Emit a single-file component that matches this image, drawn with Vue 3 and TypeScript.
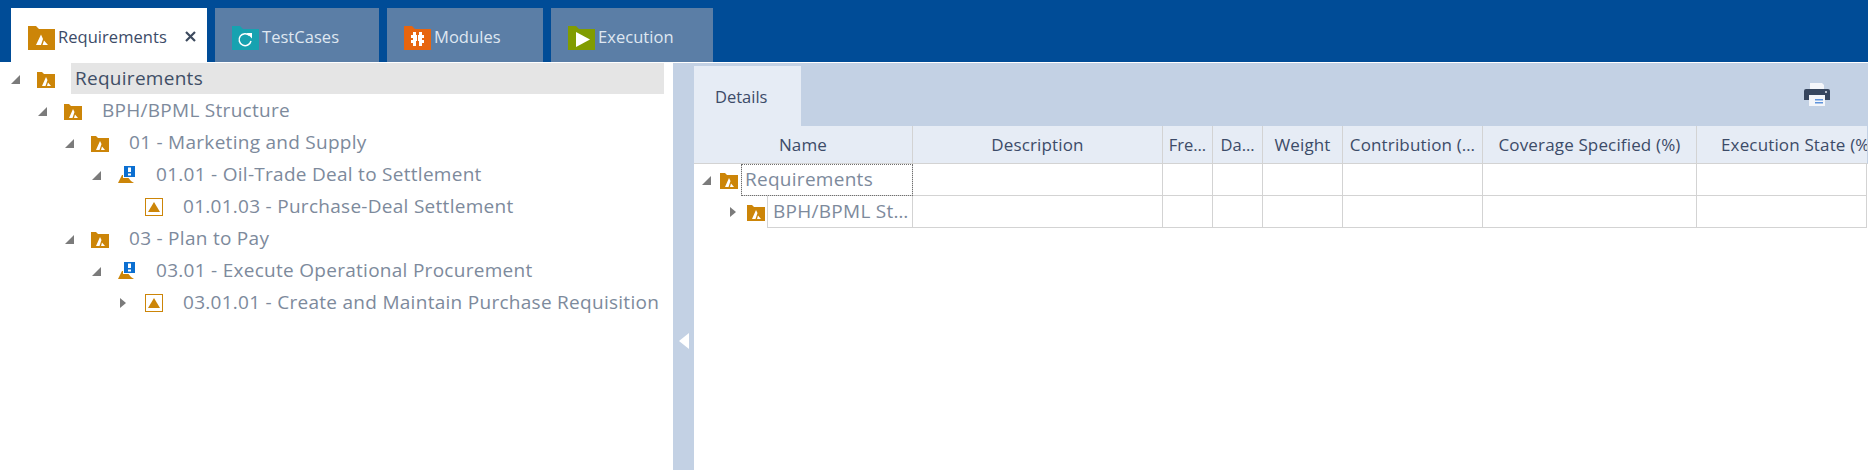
<script setup lang="ts">
type IconKind = 'folder' | 'process' | 'req'
interface TreeNode { label: string; depth: number; icon: IconKind; state: 'open' | 'closed' | 'leaf'; selected?: boolean }

const tabs = [
  { name: 'Requirements', kind: 'req', width: 196, active: true },
  { name: 'TestCases', kind: 'test', width: 164, active: false },
  { name: 'Modules', kind: 'mod', width: 156, active: false },
  { name: 'Execution', kind: 'exec', width: 162, active: false },
]

const nodes: TreeNode[] = [
  { label: 'Requirements', depth: 0, icon: 'folder', state: 'open', selected: true },
  { label: 'BPH/BPML Structure', depth: 1, icon: 'folder', state: 'open' },
  { label: '01 - Marketing and Supply', depth: 2, icon: 'folder', state: 'open' },
  { label: '01.01 - Oil-Trade Deal to Settlement', depth: 3, icon: 'process', state: 'open' },
  { label: '01.01.03 - Purchase-Deal Settlement', depth: 4, icon: 'req', state: 'leaf' },
  { label: '03 - Plan to Pay', depth: 2, icon: 'folder', state: 'open' },
  { label: '03.01 - Execute Operational Procurement', depth: 3, icon: 'process', state: 'open' },
  { label: '03.01.01 - Create and Maintain Purchase Requisition', depth: 4, icon: 'req', state: 'closed' },
]

const columns = [
  { title: 'Name', cls: '' },
  { title: 'Description', cls: '' },
  { title: 'Fre…', cls: 'tight' },
  { title: 'Da…', cls: 'tight' },
  { title: 'Weight', cls: '' },
  { title: 'Contribution (…', cls: '' },
  { title: 'Coverage Specified (%)', cls: '' },
  { title: 'Execution State (%)', cls: 'clip' },
]
const emptyCols = 7
</script>

<template>
  <div class="app">
    <header class="tabbar">
      <div
        v-for="t in tabs"
        :key="t.name"
        class="tab"
        :class="{ active: t.active }"
        :style="{ width: t.width + 'px' }"
      >
        <svg class="tab-icon" width="27" height="24" viewBox="0 0 27 24">
          <path
            d="M0 0H8L11 3H27V24H0Z"
            :fill="t.kind === 'req' ? '#cc8508' : t.kind === 'test' ? '#17a2b0' : t.kind === 'mod' ? '#e7650f' : '#819c00'"
          />
          <template v-if="t.kind === 'req'">
            <path d="M8 19L13 8.5L15 13L13 19Z M14.5 19L16 14.5L20 19Z" fill="#fff" />
          </template>
          <template v-else-if="t.kind === 'test'">
            <path d="M17.5 9.5A6 6 0 1 0 19 15" fill="none" stroke="#fff" stroke-width="1.5" />
            <path d="M14.5 7H20V12.5Z" fill="#fff" />
          </template>
          <template v-else-if="t.kind === 'mod'">
            <path d="M9 6H12V9H13V15H12V20H9V17H7V14H9V12H7V9H9Z M15 6H18V9H20V12H18V14H20V17H18V20H15V15H14V9H15Z" fill="#fff" />
          </template>
          <template v-else>
            <path d="M8 6L22 13.5L8 21Z" fill="#fff" />
          </template>
        </svg>
        <span class="tab-name">{{ t.name }}</span>
        <svg v-if="t.active" class="close" width="11" height="11" viewBox="0 0 11 11">
          <path d="M1 1L10 10M10 1L1 10" stroke="#3d4a5e" stroke-width="2.2" fill="none" />
        </svg>
      </div>
    </header>

    <main class="body">
      <section class="tree">
        <div
          v-for="n in nodes"
          :key="n.label"
          class="tree-row"
          :style="{ paddingLeft: 11 + n.depth * 27 + 'px' }"
        >
          <span class="expander">
            <svg v-if="n.state === 'open'" width="9" height="9" viewBox="0 0 9 9"><path d="M9 0V9H0Z" fill="#7b7b7b" /></svg>
            <svg v-else-if="n.state === 'closed'" class="arrow-closed" width="6" height="10" viewBox="0 0 6 10"><path d="M0 0L6 5L0 10Z" fill="#7b7b7b" /></svg>
          </span>
          <svg v-if="n.icon === 'folder'" class="node-icon" width="18" height="18" viewBox="0 0 18 18">
            <path d="M0 2H5L7 4H18V18H0Z" fill="#cc8508" />
            <path d="M5 16L9 7L10.5 10L8.5 16Z M10 16L11 12.5L14 16Z" fill="#fff" />
          </svg>
          <svg v-else-if="n.icon === 'process'" class="node-icon" width="18" height="18" viewBox="0 0 18 18">
            <path d="M0 17L4 9H8L13 15L16 17Z" fill="#cc8508" />
            <rect x="5" y="0" width="13" height="12" fill="#fff" />
            <rect x="6" y="0" width="11" height="11" fill="#0b6fd1" />
            <rect x="10" y="1.5" width="3" height="4.5" fill="#fff" />
            <rect x="10" y="7.5" width="3" height="2" fill="#fff" />
          </svg>
          <svg v-else class="node-icon" width="18" height="18" viewBox="0 0 18 18">
            <rect x="0.5" y="0.5" width="17" height="17" fill="#fff" stroke="#cc8508" />
            <path d="M9 4L15 14H3Z" fill="#cc8508" />
          </svg>
          <span class="tree-label" :class="{ selected: n.selected }">{{ n.label }}</span>
        </div>
      </section>

      <aside class="splitter">
        <svg width="10" height="16" viewBox="0 0 10 16"><path d="M10 0V16L0 8Z" fill="#fff" /></svg>
      </aside>

      <section class="details">
        <div class="detail-bar">
          <div class="detail-tab">Details</div>
          <svg class="printer" width="26" height="25" viewBox="0 0 26 25">
            <path d="M6 1H18L20 3V8H6Z" fill="#f4f6fa" />
            <path d="M2 7H24Q26 7 26 9V18H0V9Q0 7 2 7Z" fill="#37465e" />
            <rect x="5" y="13" width="16" height="11" fill="#f4f6fa" />
            <rect x="11" y="17" width="8" height="1.5" fill="#5e93dc" />
            <rect x="11" y="20" width="8" height="1.5" fill="#5e93dc" />
            <circle cx="22" cy="10" r="1" fill="#dfe5ee" />
          </svg>
        </div>
        <div class="grid">
          <div class="head" v-for="c in columns" :key="c.title" :class="c.cls"><span>{{ c.title }}</span></div>

          <div class="name-cell">
            <span class="name-tools first">
              <svg width="9" height="9" viewBox="0 0 9 9"><path d="M9 0V9H0Z" fill="#7b7b7b" /></svg>
              <svg class="grid-icon" width="18" height="18" viewBox="0 0 18 18">
                <path d="M0 2H5L7 4H18V18H0Z" fill="#cc8508" />
                <path d="M5 16L9 7L10.5 10L8.5 16Z M10 16L11 12.5L14 16Z" fill="#fff" />
              </svg>
            </span>
            <span class="name-box focused">Requirements</span>
          </div>
          <div class="cell" v-for="i in emptyCols" :key="'a' + i"></div>

          <div class="name-cell">
            <span class="name-tools second">
              <svg width="6" height="10" viewBox="0 0 6 10"><path d="M0 0L6 5L0 10Z" fill="#7b7b7b" /></svg>
              <svg class="grid-icon" width="18" height="18" viewBox="0 0 18 18">
                <path d="M0 2H5L7 4H18V18H0Z" fill="#cc8508" />
                <path d="M5 16L9 7L10.5 10L8.5 16Z M10 16L11 12.5L14 16Z" fill="#fff" />
              </svg>
            </span>
            <span class="name-box">BPH/BPML St…</span>
          </div>
          <div class="cell" v-for="i in emptyCols" :key="'b' + i"></div>
        </div>
      </section>
    </main>
  </div>
</template>

<style scoped>
.app {
  width: 1868px;
  height: 470px;
  display: flex;
  flex-direction: column;
  overflow: hidden;
  background: #fff;
  font-family: "Open Sans", "Noto Sans", sans-serif;
}
.tabbar {
  height: 62px;
  flex: none;
  background: #004c97;
  display: flex;
  gap: 8px;
  padding: 8px 0 0 11px;
  box-sizing: border-box;
}
.tab {
  height: 54px;
  box-sizing: border-box;
  background: #5b7ea6;
  color: #dfe7f1;
  display: flex;
  align-items: center;
  padding-left: 17px;
  font-size: 16.5px;
  letter-spacing: 0.05px;
}
.tab.active { background: #fff; color: #3c4b68; }
.tab-icon { flex: none; margin-top: 5px; }
.tab-name { margin-left: 3px; margin-top: 2px; }
.close { margin-left: auto; margin-right: 11px; margin-top: 2px; }
.body {
  flex: 1;
  display: flex;
  margin-top: 1px;
  min-height: 0;
}
.tree {
  width: 673px;
  flex: none;
  box-sizing: border-box;
  padding-right: 9px;
}
.tree-row {
  height: 32px;
  display: flex;
  align-items: center;
  color: #7d8a9c;
  font-size: 19px;
  letter-spacing: 0.28px;
  white-space: nowrap;
}
.expander { width: 26px; flex: none; display: flex; align-items: center; }
.arrow-closed { margin-left: 1px; }
.node-icon { flex: none; }
.tree-label {
  flex: 1;
  margin-left: 16px;
  padding-left: 4px;
  line-height: 31px;
  height: 31px;
  align-self: flex-start;
}
.tree-label.selected { background: #e5e5e5; color: #3f4e66; }
.splitter {
  width: 21px;
  flex: none;
  background: #c3d1e4;
  display: flex;
  align-items: flex-start;
  justify-content: center;
  padding-top: 270px;
  box-sizing: border-box;
}
.details { flex: 1; min-width: 0; display: flex; flex-direction: column; }
.detail-bar {
  height: 63px;
  flex: none;
  background: #c3d1e4;
  display: flex;
  justify-content: space-between;
  align-items: flex-start;
  padding-top: 3px;
  box-sizing: border-box;
}
.detail-tab {
  width: 107px;
  height: 60px;
  background: #e6ecf5;
  color: #3c4b68;
  font-size: 16.5px;
  display: flex;
  align-items: center;
  padding-left: 21px;
  box-sizing: border-box;
}
.printer { margin: 16px 38px 0 0; }
.grid {
  display: grid;
  grid-template-columns: 219px 250px 50px 50px 80px 140px 214px 170px 1px;
  grid-auto-rows: auto;
  width: 1174px;
}
.head {
  height: 38px;
  box-sizing: border-box;
  background: #e6ecf5;
  border-bottom: 1px solid #d3d3d3;
  border-right: 1px solid #d3d3d3;
  color: #3c4b68;
  font-size: 17px;
  letter-spacing: 0.15px;
  display: flex;
  align-items: center;
  justify-content: center;
  white-space: nowrap;
  overflow: hidden;
}
.head.tight { font-size: 16.5px; letter-spacing: 0; }
.head.clip {
  justify-content: flex-start;
  padding-left: 24px;
  grid-column: span 2;
  border-right: 1px solid #c3d1e4;
}
.name-cell { height: 32px; display: flex; grid-column: 1; }
.name-tools { display: flex; align-items: center; flex: none; box-sizing: border-box; }
.name-tools.first { width: 47px; padding-left: 8px; }
.name-tools.second { width: 73px; padding-left: 36px; }
.grid-icon { margin-left: auto; margin-right: 3px; }
.name-tools.second .grid-icon { margin-right: 2px; }
.name-box {
  flex: 1;
  box-sizing: border-box;
  border-right: 1px solid #d3d3d3;
  border-bottom: 1px solid #d3d3d3;
  border-left: 1px solid #d3d3d3;
  color: #7d8a9c;
  font-size: 19px;
  letter-spacing: 0.28px;
  line-height: 30px;
  padding-left: 5px;
  white-space: nowrap;
  overflow: hidden;
}
.name-box.focused { outline: 1px dotted #6f6f6f; outline-offset: -1px; padding-left: 3px; }
.cell {
  height: 32px;
  box-sizing: border-box;
  border-right: 1px solid #d3d3d3;
  border-bottom: 1px solid #d3d3d3;
}
</style>

<style>
html, body { margin: 0; background: #fff; }
</style>
